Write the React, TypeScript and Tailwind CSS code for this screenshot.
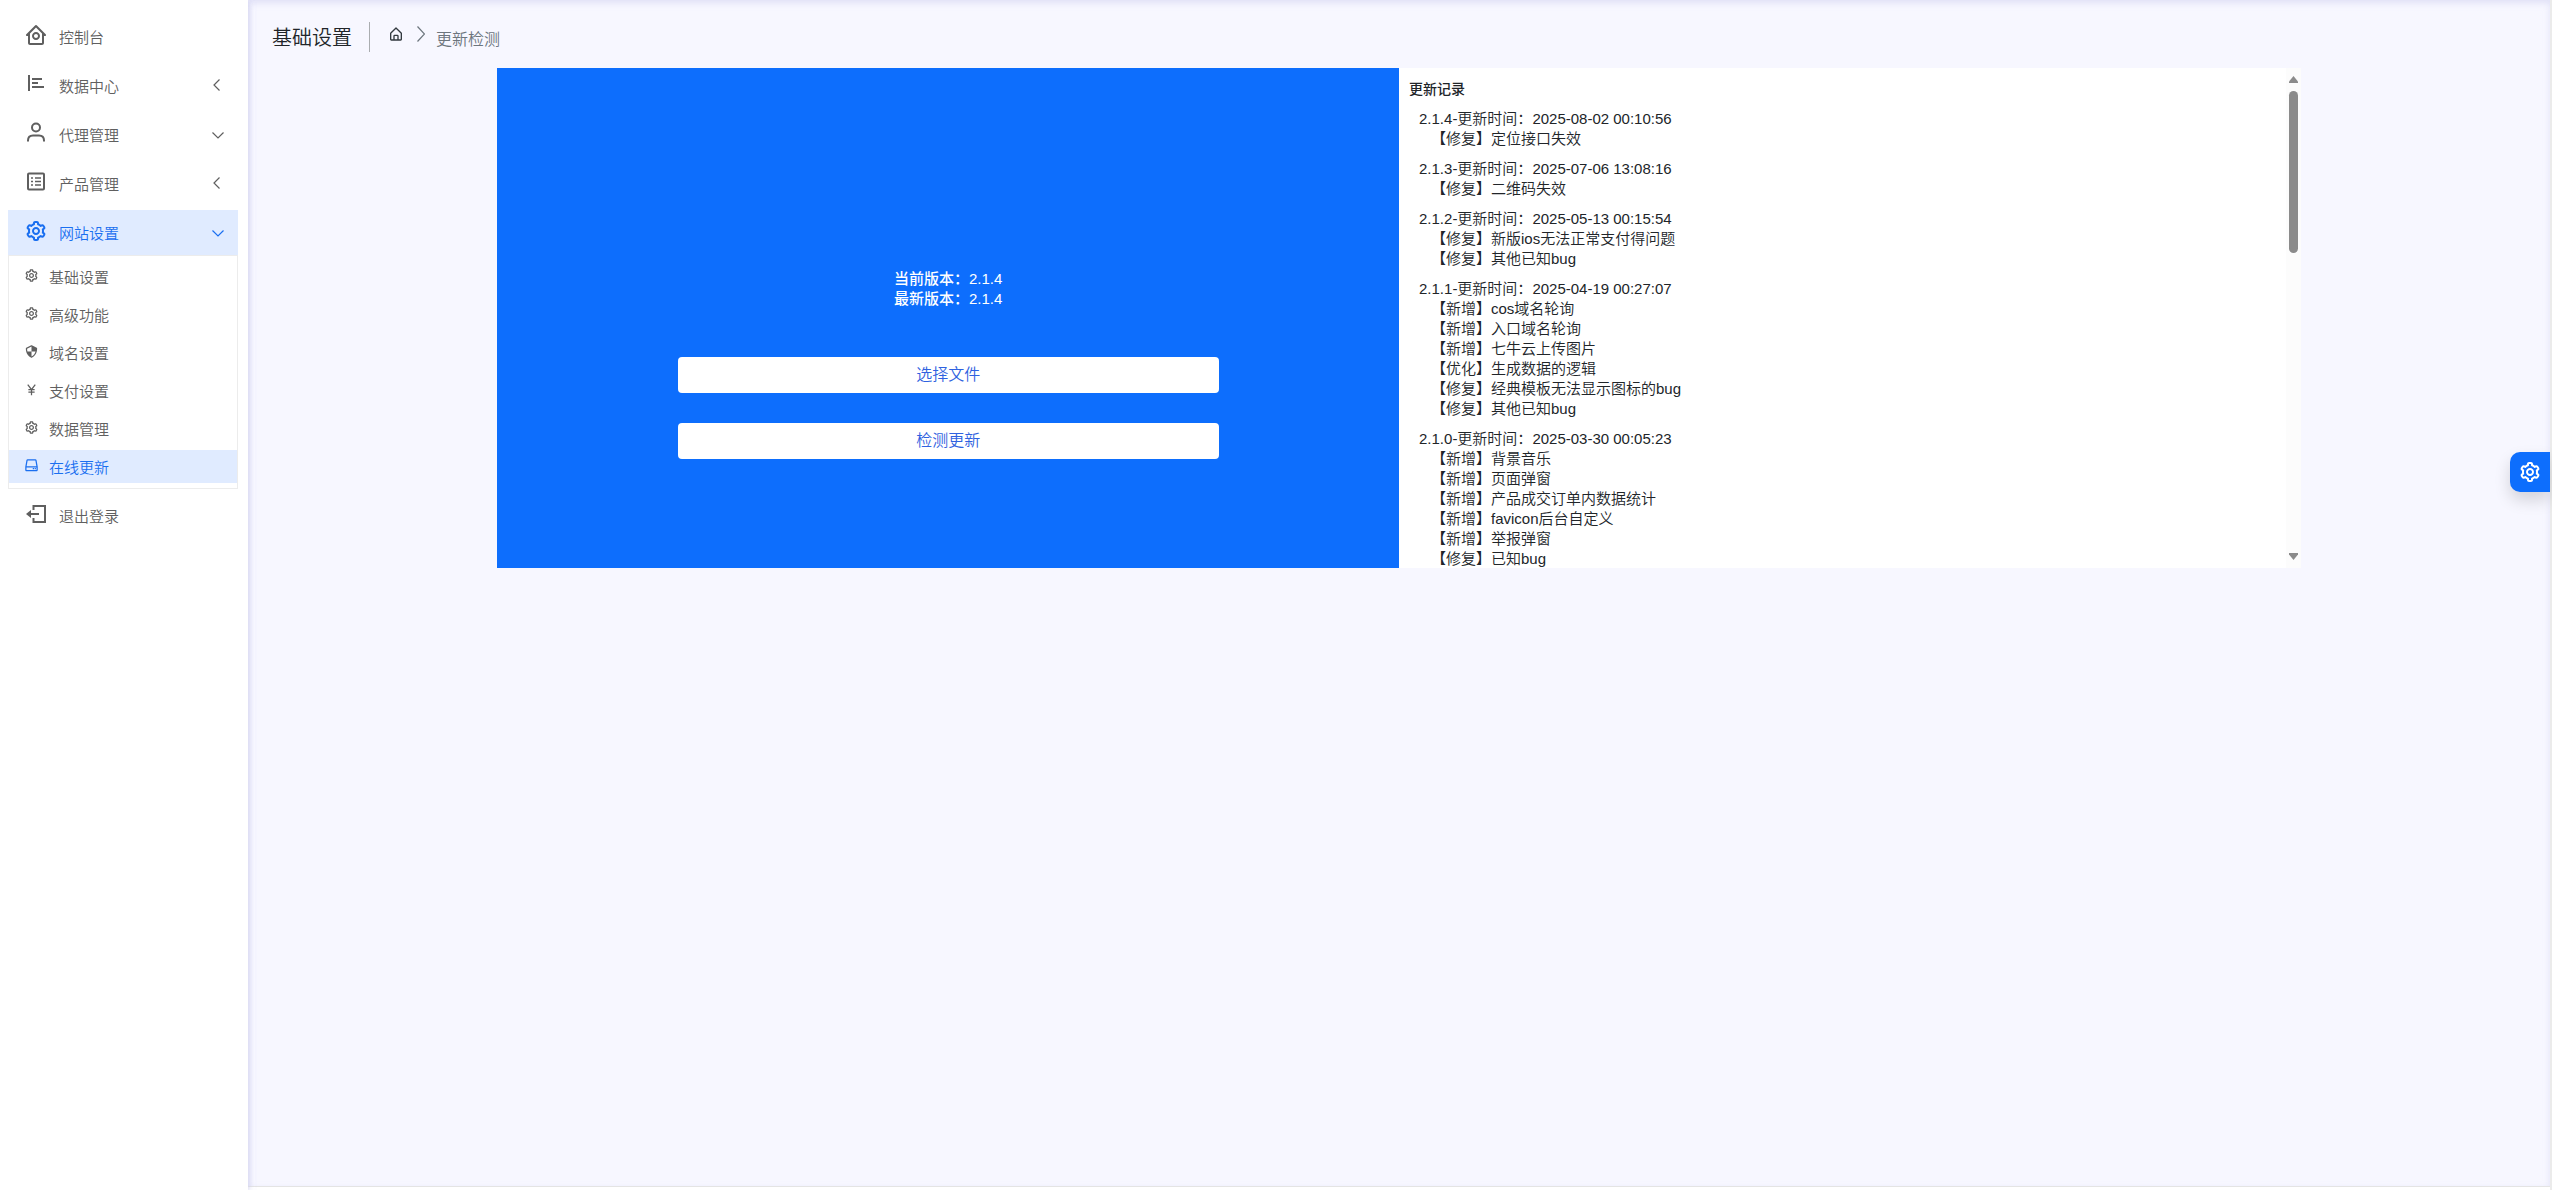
import { type ReactNode } from 'react'
import { BiCog, BiHdd, BiHomeAlt, BiHomeCircle, BiShieldQuarter, BiYen } from 'react-icons/bi'

interface IconProps {
  className?: string
}

interface LogEntry {
  version: string
  time: string
  items: string[]
}

const logs: LogEntry[] = [
  { version: '2.1.4', time: '2025-08-02 00:10:56', items: ['【修复】定位接口失效'] },
  { version: '2.1.3', time: '2025-07-06 13:08:16', items: ['【修复】二维码失效'] },
  { version: '2.1.2', time: '2025-05-13 00:15:54', items: ['【修复】新版ios无法正常支付得问题', '【修复】其他已知bug'] },
  {
    version: '2.1.1',
    time: '2025-04-19 00:27:07',
    items: [
      '【新增】cos域名轮询',
      '【新增】入口域名轮询',
      '【新增】七牛云上传图片',
      '【优化】生成数据的逻辑',
      '【修复】经典模板无法显示图标的bug',
      '【修复】其他已知bug',
    ],
  },
  {
    version: '2.1.0',
    time: '2025-03-30 00:05:23',
    items: [
      '【新增】背景音乐',
      '【新增】页面弹窗',
      '【新增】产品成交订单内数据统计',
      '【新增】favicon后台自定义',
      '【新增】举报弹窗',
      '【修复】已知bug',
    ],
  },
]

function BarsIcon({ className }: IconProps) {
  return (
    <svg className={className} viewBox="0 0 24 24" fill="none" stroke="currentColor" strokeWidth={2}>
      <path d="M5 3v16M8 7h10M8 11h6M8 15h12" />
    </svg>
  )
}

function UserIcon({ className }: IconProps) {
  return (
    <svg className={className} viewBox="0 0 24 24" fill="none" stroke="currentColor" strokeWidth={2}>
      <circle cx="12" cy="6.500" r="4" />
      <path d="M4 20.500v-1c0-3 2-5 5-5h6c3 0 5 2 5 5v1" />
    </svg>
  )
}

function ListIcon({ className }: IconProps) {
  return (
    <svg className={className} viewBox="0 0 24 24" fill="none" stroke="currentColor" strokeWidth={2}>
      <rect x="4" y="3.500" width="16" height="16" rx="1" />
      <path d="M7 8h2M11 8h6M7 11.500h2M11 11.500h6M7 15h2M11 15h6" strokeWidth={1.500} />
    </svg>
  )
}

function ExitIcon({ className }: IconProps) {
  return (
    <svg className={className} viewBox="0 0 24 24" fill="none" stroke="currentColor" strokeWidth={2}>
      <path d="M9.500 8V4H21v16H9.500v-4M6 12h9" />
      <path d="m2 12 5-4v8z" fill="currentColor" stroke="none" />
    </svg>
  )
}

function ChevronLeft() {
  return (
    <svg className="mr-[18px] mb-0.5 h-3 w-[7px]" viewBox="0 0 7 12" fill="none" stroke="currentColor" strokeWidth={1.200}>
      <path d="M6.500.5 1 6l5.500 5.500" />
    </svg>
  )
}

function ChevronDown() {
  return (
    <svg className="mt-0.5 mr-3.5 h-[7px] w-3" viewBox="0 0 12 7" fill="none" stroke="currentColor" strokeWidth={1.200}>
      <path d="M.5.5 6 6 11.500.5" />
    </svg>
  )
}

interface MenuItemProps {
  icon: ReactNode
  label: string
  arrow?: 'left' | 'down'
  active?: boolean
}

function MenuItem({ icon, label, arrow, active }: MenuItemProps) {
  return (
    <a
      href="#"
      className={`flex h-[45px] items-center pl-4 text-[15px] ${active ? 'bg-[#e0ebff] text-[#1a6ff0]' : 'text-[#5f5f5f]'}`}
    >
      <span className="pb-1">{icon}</span>
      <span className="ml-[11px] flex-1 pt-1">{label}</span>
      {arrow === 'left' && <ChevronLeft />}
      {arrow === 'down' && <ChevronDown />}
    </a>
  )
}

const subItems = [
  { label: '基础设置', icon: BiCog },
  { label: '高级功能', icon: BiCog },
  { label: '域名设置', icon: BiShieldQuarter },
  { label: '支付设置', icon: BiYen },
  { label: '数据管理', icon: BiCog },
  { label: '在线更新', icon: BiHdd },
]

function Sidebar() {
  return (
    <aside className="z-10 w-[248px] shrink-0 bg-white pt-3.5 pr-2.5 pl-2 shadow-[0_2px_6px_rgba(206,206,238,0.54),0_2px_6px_rgba(206,206,238,0.54)]">
      <nav className="flex flex-col gap-1">
        <MenuItem icon={<BiHomeCircle className="size-6" />} label="控制台" />
        <MenuItem icon={<BarsIcon className="size-6" />} label="数据中心" arrow="left" />
        <MenuItem icon={<UserIcon className="size-6" />} label="代理管理" arrow="down" />
        <MenuItem icon={<ListIcon className="size-6" />} label="产品管理" arrow="left" />
        <div>
          <MenuItem icon={<BiCog className="size-6" />} label="网站设置" arrow="down" active />
          <ul className="flex flex-col gap-[5px] border border-[#ececec] pt-1 pb-[5px]">
            {subItems.map(({ label, icon: Icon }) => (
              <li key={label}>
                <a
                  href="#"
                  className={`flex h-[33px] items-center pl-[15px] text-[15px] ${
                    label === '在线更新' ? 'bg-[#e0ebff] text-[#1a6ff0]' : 'text-[#5f5f5f]'
                  }`}
                >
                  <Icon className="mb-0.5 size-[15px]" />
                  <span className="ml-2.5 pt-[3px]">{label}</span>
                </a>
              </li>
            ))}
          </ul>
        </div>
        <MenuItem icon={<ExitIcon className="size-6" />} label="退出登录" />
      </nav>
    </aside>
  )
}

function UpdateLog() {
  return (
    <section className="flex w-1/2 bg-white">
      <div className="flex-1 overflow-hidden px-2.5 pt-[11px] text-[15px] leading-5 text-[#212529]">
        <h2 className="text-sm leading-5 font-medium">更新记录</h2>
        {logs.map((log) => (
          <div key={log.version} className="mt-2.5 pl-2.5">
            <p>{log.version}-更新时间：{log.time}</p>
            <ul className="pl-3">
              {log.items.map((item) => (
                <li key={item}>{item}</li>
              ))}
            </ul>
          </div>
        ))}
      </div>
      {/* Scroll track */}
      <div className="flex w-[15px] flex-col items-center justify-between bg-[#fcfcfc] py-2 text-[#8b8b8b]">
        <div className="flex flex-col items-center gap-2">
          <svg className="h-[7px] w-[9px]" viewBox="0 0 9 7" fill="currentColor">
            <path d="M4.500 0 9 5.500V7H0V5.500z" />
          </svg>
          <div className="h-[162px] w-[9px] rounded-full bg-[#8b8b8b]" />
        </div>
        <svg className="h-[7px] w-[9px]" viewBox="0 0 9 7" fill="currentColor">
          <path d="M4.500 7 9 1.500V0H0v1.500z" />
        </svg>
      </div>
    </section>
  )
}

export default function App() {
  return (
    <div className="flex h-screen overflow-hidden border-r-2 border-[#ebebeb] bg-[#f7f7ff] font-['Liberation_Sans','Noto_Sans_CJK_SC',sans-serif] font-[350]">
      <Sidebar />
      <div className="flex min-w-0 flex-1 flex-col">
        <main className="flex-1 px-6 pt-[22px] shadow-[inset_0_3px_6px_rgba(206,206,238,0.54)]">
          <header className="flex h-[30px] items-center">
            <h1 className="border-r border-[#aaadb0] pt-0.5 pr-[17px] text-xl leading-7 font-[350] text-[#212529]">基础设置</h1>
            <nav className="flex items-center pl-4">
              <a href="#" aria-label="首页" className="mb-1.5 px-0.5 text-[#32393f]">
                <BiHomeAlt className="size-4" />
              </a>
              <svg className="mx-[11px] mb-1.5 h-4 w-2" viewBox="0 0 8 16" fill="none" stroke="#6c757d" strokeWidth={1.200}>
                <path d="m.5.5 7 7.500-7 7.500" />
              </svg>
              <span className="pt-1.5 text-base text-[#6c757d]">更新检测</span>
            </nav>
          </header>
          <div className="mx-auto mt-4 flex h-[500px] w-4/5">
            <section className="flex w-1/2 flex-col items-center bg-[#0d6efd] pt-[201px]">
              <div className="text-[15px] leading-5 font-medium text-white">
                <p>当前版本：2.1.4</p>
                <p>最新版本：2.1.4</p>
              </div>
              <button type="button" className="mt-12 h-9 w-3/5 rounded bg-white text-base font-[350] text-[#2f62e0]">
                选择文件
              </button>
              <button type="button" className="mt-[30px] h-9 w-3/5 rounded bg-white text-base font-[350] text-[#2f62e0]">
                检测更新
              </button>
            </section>
            <UpdateLog />
          </div>
        </main>
        <footer className="h-1 border-t border-[#e4e4e4] bg-white" />
      </div>
      <button
        type="button"
        aria-label="主题设置"
        className="fixed top-[452px] right-0.5 z-20 flex h-10 w-10 items-center justify-center rounded-l-[10px] bg-[#0d6efd] text-white shadow-[0_8px_16px_rgba(0,0,0,0.15)]"
      >
        <BiCog className="size-6" />
      </button>
    </div>
  )
}
